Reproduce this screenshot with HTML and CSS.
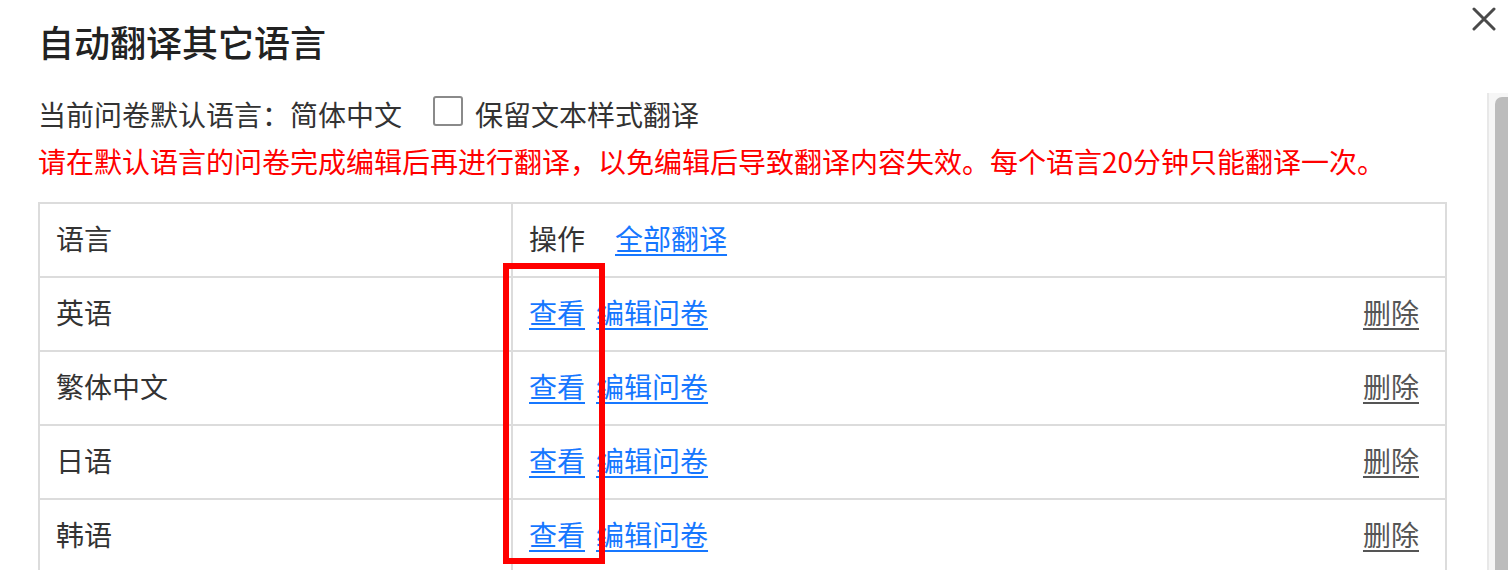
FILE: index.html
```html
<!DOCTYPE html>
<html lang="zh-CN">
<head>
<meta charset="utf-8">
<title>自动翻译其它语言</title>
<link rel="stylesheet" href="styles.css">
</head>
<body>
<div class="dialog">
  <div class="dialog-header">
    <h1 class="dialog-title">自动翻译其它语言</h1>
    <button class="close-btn" aria-label="关闭">
      <svg viewBox="0 0 24 24" width="24" height="24"><path d="M2 2 L22 22 M22 2 L2 22" stroke="#4a4a4a" stroke-width="3" stroke-linecap="round" fill="none"/></svg>
    </button>
  </div>
  <div class="dialog-body">
    <div class="content">
      <div class="info-row">
        <span>当前问卷默认语言：简体中文</span>
        <span class="checkbox"></span>
        <span>保留文本样式翻译</span>
      </div>
      <p class="warning">请在默认语言的问卷完成编辑后再进行翻译，以免编辑后导致翻译内容失效。每个语言20分钟只能翻译一次。</p>
      <div class="lang-table">
        <div class="row">
          <div class="cell">语言</div>
          <div class="cell ops"><span>操作</span><a class="link all" href="#">全部翻译</a></div>
        </div>
        <div class="row">
          <div class="cell">英语</div>
          <div class="cell ops"><a class="link" href="#">查看</a><a class="link edit" href="#">编辑问卷</a><a class="del" href="#">删除</a></div>
        </div>
        <div class="row">
          <div class="cell">繁体中文</div>
          <div class="cell ops"><a class="link" href="#">查看</a><a class="link edit" href="#">编辑问卷</a><a class="del" href="#">删除</a></div>
        </div>
        <div class="row">
          <div class="cell">日语</div>
          <div class="cell ops"><a class="link" href="#">查看</a><a class="link edit" href="#">编辑问卷</a><a class="del" href="#">删除</a></div>
        </div>
        <div class="row">
          <div class="cell">韩语</div>
          <div class="cell ops"><a class="link" href="#">查看</a><a class="link edit" href="#">编辑问卷</a><a class="del" href="#">删除</a></div>
        </div>
      </div>
    </div>
    <div class="scroll-track"><div class="scroll-thumb"></div></div>
  </div>
  <div class="highlight-box"></div>
</div>
</body>
</html>
```
FILE: styles.css
```css
html, body {
  margin: 0;
  padding: 0;
  background: #ffffff;
  overflow: hidden;
}
body {
  font-family: "Noto Sans CJK SC", "Noto Sans", sans-serif;
  color: #333333;
  font-size: 28px;
}
.dialog {
  position: relative;
  width: 1508px;
  height: 570px;
  overflow: hidden;
}
.dialog-header {
  height: 93px;
  display: flex;
  justify-content: space-between;
  align-items: flex-start;
}
.dialog-title {
  margin: 23px 0 0 38px;
  font-size: 36px;
  line-height: 36px;
  font-weight: 500;
  color: #222222;
}
.close-btn {
  margin: 7px 12px 0 0;
  width: 24px;
  height: 24px;
  padding: 0;
  border: 0;
  background: transparent;
  display: flex;
}
.dialog-body {
  display: flex;
  height: 477px;
}
.content {
  flex: 1;
  padding: 0 40px 0 38px;
}
.info-row {
  display: flex;
  align-items: center;
  height: 42px;
  line-height: 42px;
}
.checkbox {
  width: 26px;
  height: 26px;
  border: 2px solid #8a8a8a;
  border-radius: 3px;
  margin: -6px 12px 0 31px;
  background: #ffffff;
}
.warning {
  margin: 5px 0 0 0;
  line-height: 42px;
  color: #ff0000;
  white-space: nowrap;
}
.lang-table {
  margin-top: 20px;
  border-top: 2px solid #dcdcdc;
  border-left: 2px solid #dcdcdc;
}
.row {
  display: grid;
  grid-template-columns: 473px 1fr;
}
.cell {
  box-sizing: border-box;
  height: 74px;
  border-right: 2px solid #dcdcdc;
  border-bottom: 2px solid #dcdcdc;
  padding: 0 16px 5px 16px;
  display: flex;
  align-items: center;
}
.ops {
  padding-right: 26px;
}
.link {
  color: #1677ff;
  text-decoration: underline;
  text-underline-offset: 4px;
  text-decoration-thickness: 2px;
}
.all {
  margin-left: 30px;
}
.edit {
  margin-left: 11px;
}
.del {
  margin-left: auto;
  color: #555555;
  text-decoration: underline;
  text-underline-offset: 4px;
  text-decoration-thickness: 2px;
}
.scroll-track {
  width: 19px;
  border-left: 2px solid #e8e8e8;
  background: #f6f6f6;
  padding-top: 4px;
  display: flex;
  justify-content: flex-end;
}
.scroll-thumb {
  width: 13px;
  height: 600px;
  background: #bcbcbc;
  border-radius: 7px 0 0 0;
}
.highlight-box {
  position: absolute;
  left: 503px;
  top: 263px;
  width: 90px;
  height: 289px;
  border: 6px solid #ff0000;
}
```
